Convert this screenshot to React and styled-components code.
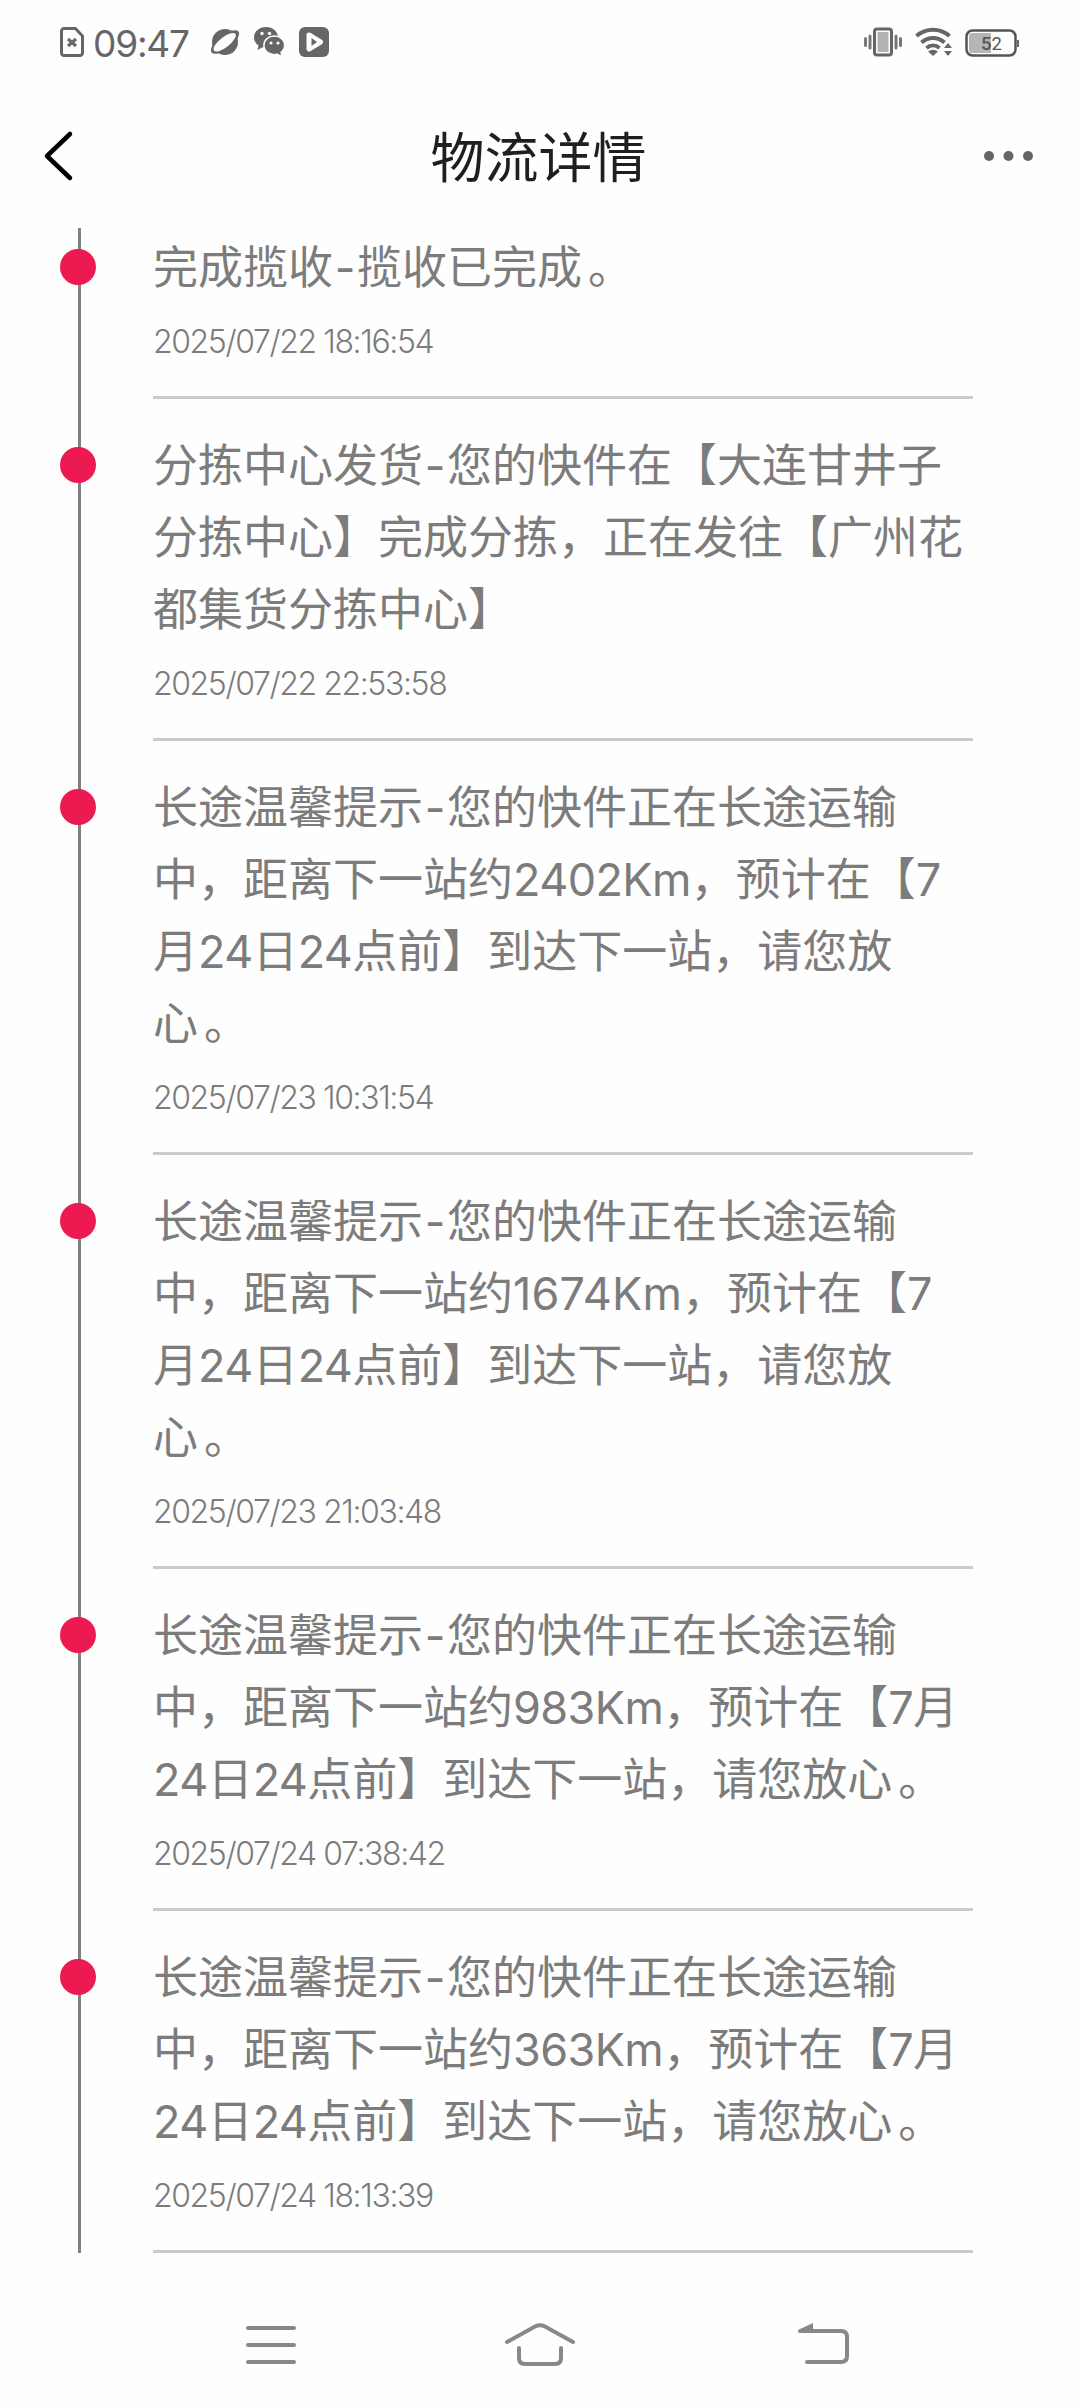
import React from 'react';
import styled, { createGlobalStyle } from 'styled-components';

const GlobalStyle = createGlobalStyle`
    * {
        box-sizing: border-box;
    }

    body {
        margin: 0;
        background-color: #fefefe;
        font-family: "Noto Sans CJK SC", sans-serif;
    }
`;

const Page = styled.div`
    display: flex;
    flex-direction: column;
    width: 1080px;
    height: 2408px;
    overflow: hidden;
    background-color: #fefefe;
`;

const StatusBar = styled.header`
    display: flex;
    justify-content: space-between;
    align-items: center;
    height: 84px;
    padding: 0 60px 0 60px;
    flex-shrink: 0;
`;

const StatusGroup = styled.div`
    display: flex;
    align-items: center;
`;

const Icon = styled.svg`
    display: block;
    flex-shrink: 0;
    margin-left: ${props => props.$gap || 0}px;
    margin-right: ${props => props.$after || 0}px;
`;

const Clock = styled.span`
    width: 97px;
    margin-left: 9px;
    font-family: Inter, sans-serif;
    font-size: 37px;
    line-height: 80px;
    letter-spacing: -1.2px;
    color: #666;
    white-space: nowrap;
    padding-top: 4px;
`;

const TitleBar = styled.div`
    display: grid;
    grid-template-columns: 1fr auto 1fr;
    align-items: center;
    height: 144px;
    padding: 0 46px 0 43px;
    flex-shrink: 0;

    & > :last-child {
        justify-self: end;
    }
`;

const Title = styled.h1`
    margin: 0;
    padding-bottom: 3px;
    font-size: 54px;
    font-weight: 400;
    line-height: 141px;
    color: #1f1f1f;
`;

const Timeline = styled.main`
    display: flex;
    flex-direction: column;
    justify-content: flex-end;
    height: 2025px;
    flex-shrink: 0;
    overflow: hidden;
`;

const Entry = styled.section`
    display: flex;
    flex-shrink: 0;
    padding-left: 60px;
`;

const Rail = styled.div`
    display: flex;
    justify-content: center;
    width: 36px;
    margin-right: 57px;
    padding-left: 3px;
    background: linear-gradient(#808080, #808080) 18px 0 / 3px 100% no-repeat;
`;

const Dot = styled.div`
    width: 36px;
    height: 36px;
    margin: 48px 0 0 -3px;
    flex-shrink: 0;
    border-radius: 50%;
    background-color: #ed1a52;
`;

const Body = styled.div`
    width: 820px;
    padding-top: 28px;
    border-bottom: 3px solid #cbcbcb;
`;

const Line = styled.div`
    height: 72px;
    font-size: 45px;
    line-height: 72px;
    color: #7c7c7c;
    white-space: nowrap;
`;

const Latin = styled.span`
    font-family: Inter, sans-serif;
    letter-spacing: ${props => props.$track}px;
`;

const Dash = styled.span`
    display: inline-block;
    width: 24px;
    font-family: Inter, sans-serif;
    text-align: center;
`;

const Stop = styled.span`
    margin-left: 6px;
`;

const Time = styled.div`
    height: 95px;
    padding-top: 3px;
    font-family: Inter, sans-serif;
    font-size: 32px;
    font-weight: 300;
    line-height: 75px;
    letter-spacing: -1.4px;
    color: #7c7c7c;
    white-space: nowrap;
`;

const NavBar = styled.nav`
    display: flex;
    justify-content: space-between;
    align-items: center;
    flex: 1;
    padding: 29px 227px 0 243px;
`;

const entries = [
    {
        lines: ['完成揽收-揽收已完成。'],
        time: '2025/07/22 18:16:54',
    },
    {
        lines: [
            '分拣中心发货-您的快件在【大连甘井子',
            '分拣中心】完成分拣，正在发往【广州花',
            '都集货分拣中心】',
        ],
        time: '2025/07/22 22:53:58',
    },
    {
        lines: [
            '长途温馨提示-您的快件正在长途运输',
            '中，距离下一站约2402Km，预计在【7',
            '月24日24点前】到达下一站，请您放',
            '心。',
        ],
        time: '2025/07/23 10:31:54',
    },
    {
        lines: [
            '长途温馨提示-您的快件正在长途运输',
            '中，距离下一站约1674Km，预计在【7',
            '月24日24点前】到达下一站，请您放',
            '心。',
        ],
        time: '2025/07/23 21:03:48',
    },
    {
        lines: [
            '长途温馨提示-您的快件正在长途运输',
            '中，距离下一站约983Km，预计在【7月',
            '24日24点前】到达下一站，请您放心。',
        ],
        time: '2025/07/24 07:38:42',
    },
    {
        lines: [
            '长途温馨提示-您的快件正在长途运输',
            '中，距离下一站约363Km，预计在【7月',
            '24日24点前】到达下一站，请您放心。',
        ],
        time: '2025/07/24 18:13:39',
    },
];

// digits and latin letters use a different face than the chinese text
const renderText = (text) =>
    text.split(/([0-9A-Za-z]+|-|。)/).map((part, i) => {
        if (part === '-') return <Dash key={i}>-</Dash>;
        if (part === '。') return <Stop key={i}>。</Stop>;
        if (/^[0-9A-Za-z]/.test(part)) {
            return <Latin key={i} $track={part[0] === '1' ? 0.2 : -0.6}>{part}</Latin>;
        }
        return part;
    });

const SimIcon = () => (
    <Icon width="24" height="30" viewBox="0 0 24 30" fill="none" stroke="#666" strokeWidth="3">
        <path d="M4 1.5H15.5L22.5 9V26a2.5 2.5 0 0 1-2.5 2.5H4A2.5 2.5 0 0 1 1.5 26V4A2.5 2.5 0 0 1 4 1.5Z" />
        <path d="M8 12l8 7M16 12l-8 7" />
    </Icon>
);

const PlanetIcon = () => (
    <Icon $gap={20} width="30" height="28" viewBox="0 0 30 28">
        <circle cx="15" cy="14" r="13" fill="#666" />
        <ellipse cx="15" cy="14" rx="17" ry="7" transform="rotate(-38 15 14)" fill="#666" />
        <ellipse cx="14.7" cy="14.2" rx="13.6" ry="5" transform="rotate(-38 14.7 14.2)" fill="#fefefe" />
    </Icon>
);

const WechatIcon = () => (
    <Icon $gap={14} width="31" height="30" viewBox="0 0 31 30">
        <path d="M12 0C5.2 0 0 4.6 0 10.4c0 3.300 1.800 6.200 4.500 8.100L3.500 23l5-2.700c6 1.500 15.500-2 15.500-9.900C24 4.600 18.700 0 12 0Z" fill="#666" />
        <path d="M20.300 9c5.900 0 10.400 4 10.400 9.300 0 2.900-1.400 5.300-3.600 7l.8 4.400-4.600-2.400c-7 1.500-13.400-2.800-13.400-9C9.900 13 14.500 9 20.300 9Z" fill="#666" stroke="#fefefe" strokeWidth="1.5" />
        <g fill="#fefefe">
            <circle cx="8" cy="6.500" r="1.700" />
            <circle cx="15.500" cy="6.500" r="1.700" />
            <circle cx="17" cy="16" r="1.600" />
            <circle cx="24" cy="16" r="1.600" />
        </g>
    </Icon>
);

const PlayIcon = () => (
    <Icon $gap={14} width="30" height="30" viewBox="0 0 30 30">
        <rect width="30" height="30" rx="6" fill="#666" />
        <path d="M10 8L21.500 15L10 22Z" fill="#fefefe" stroke="#fefefe" strokeWidth="5" strokeLinejoin="round" />
        <path d="M12.500 11L18 15L12.500 19Z" fill="#666" />
    </Icon>
);

const VibrateIcon = () => (
    <Icon width="38" height="30" viewBox="0 0 38 30">
        <rect x="10.500" y="2" width="17" height="26" rx="2.500" fill="#fefefe" stroke="#666" strokeWidth="3" />
        <rect x="13.500" y="5" width="11" height="20" fill="#b3b3b3" />
        <path d="M1.500 11.500v7M6 9v12M32 9v12M36.500 11.500v7" stroke="#777" strokeWidth="3" strokeLinecap="round" />
    </Icon>
);

const WifiIcon = () => (
    <Icon $gap={13} width="38" height="30" viewBox="0 0 38 30">
        <g fill="none" stroke="#666" strokeWidth="4">
            <path d="M1.500 9C11 .600 25 .600 34.500 9" />
            <path d="M6.500 15.500c7-6 16-6 23 0" />
            <path d="M11.500 21c4-3.500 9-3.500 13 0" />
        </g>
        <path d="M13 24.500q5-3.500 10 0L18 29Z" fill="#666" />
        <path d="M33 16l4 5h-8ZM33 29l4-5h-8Z" fill="#666" />
    </Icon>
);

const BatteryIcon = () => (
    <Icon $gap={12} width="55" height="30" viewBox="0 0 55 30">
        <rect x="1.500" y="3.500" width="49" height="25" rx="6" fill="none" stroke="#555" strokeWidth="2.500" />
        <path d="M7 6H26V26H7a3 3 0 0 1-3-3V9a3 3 0 0 1 3-3Z" fill="#b5b5b5" />
        <path d="M53 13v7" stroke="#666" strokeWidth="2" />
        <text x="16" y="23" fontFamily="Roboto, sans-serif" fontSize="18.500" fill="#555">
            <tspan fontWeight="500">5</tspan>2
        </text>
    </Icon>
);

const App = () => {
    return (
        <Page>
            <GlobalStyle />
            <StatusBar>
                <StatusGroup>
                    <SimIcon />
                    <Clock>09:47</Clock>
                    <PlanetIcon />
                    <WechatIcon />
                    <PlayIcon />
                </StatusGroup>
                <StatusGroup>
                    <VibrateIcon />
                    <WifiIcon />
                    <BatteryIcon />
                </StatusGroup>
            </StatusBar>
            <TitleBar>
                <Icon width="32" height="52" viewBox="0 0 32 52" fill="none" stroke="#000" strokeWidth="4.5" strokeLinecap="round" strokeLinejoin="round">
                    <path d="M27 4L4 26L27 48" />
                </Icon>
                <Title>物流详情</Title>
                <Icon width="50" height="12" viewBox="0 0 50 12" fill="#666660">
                    <circle cx="5" cy="6" r="5" />
                    <circle cx="24.500" cy="6" r="5" />
                    <circle cx="44" cy="6" r="5" />
                </Icon>
            </TitleBar>
            <Timeline>
                {entries.map((entry) => (
                    <Entry key={entry.time}>
                        <Rail>
                            <Dot />
                        </Rail>
                        <Body>
                            {entry.lines.map((line) => (
                                <Line key={line}>{renderText(line)}</Line>
                            ))}
                            <Time>{entry.time}</Time>
                        </Body>
                    </Entry>
                ))}
            </Timeline>
            <NavBar>
                <Icon width="56" height="44" viewBox="0 0 56 44" stroke="#888" strokeWidth="4" strokeLinecap="round">
                    <path d="M5 5H51M5 22H51M5 39H51" />
                </Icon>
                <Icon $after={16} width="72" height="44" viewBox="0 0 72 44" fill="none" stroke="#888" strokeWidth="4" strokeLinecap="round">
                    <path d="M3 19L31 3.500Q36 1 41 3.500L69 19" />
                    <path d="M15 25V35Q15 41 21 41H51Q57 41 57 35V25" />
                </Icon>
                <Icon width="56" height="44" viewBox="0 0 56 44" fill="none" stroke="#888" strokeWidth="4" strokeLinecap="round">
                    <path d="M4 8H44Q50 8 50 14V33Q50 39 44 39H10" />
                    <path d="M2 10Q0 8 2 6.500L16 0V10Z" fill="#888" stroke="none" />
                </Icon>
            </NavBar>
        </Page>
    );
};

export default App;
